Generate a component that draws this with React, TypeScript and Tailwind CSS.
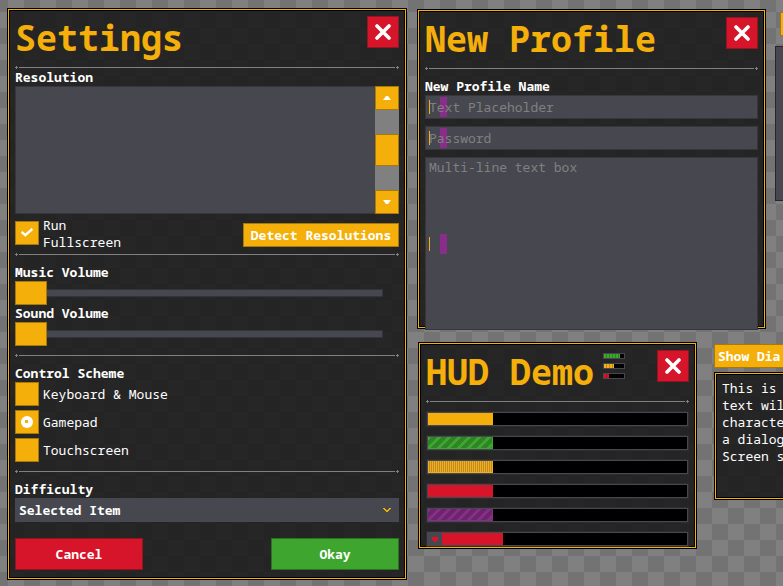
import type { ReactNode } from "react";

const FRAME =
  "border border-[#f4af0a] bg-[#161616]/85 shadow-[0_0_0_1px_#000,inset_0_0_0_1px_#000]";

function Separator() {
  return (
    <div className="flex h-[3px] items-center gap-px text-[#808080]" role="separator">
      <Plus />
      <div className="h-px grow bg-[#808080]" />
      <Plus />
    </div>
  );
}

function Plus() {
  return (
    <svg className="size-[3px] shrink-0" viewBox="0 0 3 3" shapeRendering="crispEdges" fill="currentColor">
      <path d="M1 0h1v1h1v1h-1v1h-1v-1h-1v-1h1z" />
    </svg>
  );
}

function CloseButton() {
  return (
    <button
      aria-label="Close"
      className="ml-auto flex size-8 shrink-0 items-center justify-center border border-[#961420] bg-[#d6142a]"
    >
      <svg className="size-4" viewBox="0 0 16 16" fill="none" stroke="#fff" strokeWidth="3.6" strokeLinecap="round">
        <path d="M2 2 14 14M14 2 2 14" />
      </svg>
    </button>
  );
}

function TitleBar({ title, children }: { title: string; children?: ReactNode }) {
  return (
    <header>
      <div className="flex h-[50px] items-start">
        <h1 className="text-[35px] leading-[44px] font-bold whitespace-nowrap text-[#f4af0a]">{title}</h1>
        {children}
        <CloseButton />
      </div>
      <Separator />
    </header>
  );
}

function Slider({ id, label }: { id: string; label: string }) {
  return (
    <div>
      <label htmlFor={id} className="block font-bold">
        {label}
      </label>
      <div className="relative h-6">
        <div className="absolute top-2 right-4 left-4 h-2 border border-[#33333b] bg-[#474750]" />
        <input
          id={id}
          type="range"
          defaultValue={0}
          className="relative block h-6 w-full appearance-none bg-transparent [&::-webkit-slider-thumb]:h-6 [&::-webkit-slider-thumb]:w-8 [&::-webkit-slider-thumb]:appearance-none [&::-webkit-slider-thumb]:border [&::-webkit-slider-thumb]:border-[#a87908] [&::-webkit-slider-thumb]:bg-[#f4af0a]"
        />
      </div>
    </div>
  );
}

function Tick() {
  return (
    <svg className="pointer-events-none absolute top-[7px] left-1.5 h-[9px] w-3" viewBox="0 0 12 9" fill="none" stroke="#fff" strokeWidth="2.4">
      <path d="M.6 3.8 4.3 7.2 11.4 1" />
    </svg>
  );
}

function RadioMark() {
  return (
    <svg className="pointer-events-none absolute top-1.5 left-1.5 hidden size-3 peer-checked:block" viewBox="0 0 12 12">
      <circle cx="6" cy="6" r="6" fill="#fff" />
      <rect x="4" y="4" width="3" height="3" fill="#f4af0a" shapeRendering="crispEdges" />
    </svg>
  );
}

function Radio({ label, checked }: { label: string; checked?: boolean }) {
  return (
    <label className="flex items-center gap-1">
      <span className="relative size-6 shrink-0">
        <input
          type="radio"
          name="scheme"
          defaultChecked={checked}
          className="peer block size-6 appearance-none border border-[#a87908] bg-[#f4af0a]"
        />
        <RadioMark />
      </span>
      {label}
    </label>
  );
}

function ScrollList() {
  return (
    <div className="flex h-32 border border-[#36363c] bg-[#474750]">
      <div className="-my-px -mr-px ml-auto flex w-6 flex-col bg-[#808080]">
        <button aria-label="Scroll up" className="flex h-6 items-center justify-center border border-[#a87908] bg-[#f4af0a]">
          <svg className="h-1 w-2" viewBox="0 0 8 4" fill="#fff">
            <path d="M0 4 3 0h2l3 4z" />
          </svg>
        </button>
        <div className="mt-6 h-8 border border-[#a87908] bg-[#f4af0a]" />
        <button aria-label="Scroll down" className="mt-auto flex h-6 items-center justify-center border border-[#a87908] bg-[#f4af0a]">
          <svg className="h-1 w-2" viewBox="0 0 8 4" fill="#fff">
            <path d="M0 0 3 4h2l3-4z" />
          </svg>
        </button>
      </div>
    </div>
  );
}

function SettingsWindow() {
  return (
    <section className={`absolute top-[9px] left-2 w-[398px] px-1.5 pt-1.5 pb-2 ${FRAME}`}>
      <TitleBar title="Settings" />
      <h2 className="font-bold">Resolution</h2>
      <ScrollList />
      <div className="mt-[3px] mb-0.5 flex items-start justify-between">
        <label className="flex w-32 items-start gap-1">
          <span className="relative mt-1 size-6 shrink-0">
            <input type="checkbox" defaultChecked className="block size-6 appearance-none border border-[#a87908] bg-[#f4af0a]" />
            <Tick />
          </span>
          Run Fullscreen
        </label>
        <button className="mt-1.5 h-6 w-39 border border-[#a87908] bg-[#f4af0a] font-bold whitespace-nowrap">
          Detect Resolutions
        </button>
      </div>
      <Separator />
      <div className="my-2">
        <Slider id="music" label="Music Volume" />
        <Slider id="sound" label="Sound Volume" />
      </div>
      <Separator />
      <fieldset className="my-2">
        <legend className="font-bold">Control Scheme</legend>
        <div className="flex flex-col gap-1">
          <Radio label="Keyboard & Mouse" />
          <Radio label="Gamepad" checked />
          <Radio label="Touchscreen" />
        </div>
      </fieldset>
      <Separator />
      <label htmlFor="difficulty" className="mt-2 block font-bold">
        Difficulty
      </label>
      <div className="relative">
        <select id="difficulty" className="block h-6 w-full appearance-none bg-[#474750] px-1 font-bold">
          <option>Selected Item</option>
        </select>
        <svg className="pointer-events-none absolute top-2.5 right-2 h-1 w-2" viewBox="0 0 8 4" fill="#f4af0a" shapeRendering="crispEdges">
          <path d="M0 0h2v1h1v1h2v-1h1v-1h2v1h-1v1h-1v1h-1v1h-2v-1h-1v-1h-1v-1h-1z" />
        </svg>
      </div>
      <div className="mt-4 flex justify-between">
        <button className="h-8 w-32 border border-[#961420] bg-[#d6142a] font-bold">Cancel</button>
        <button className="h-8 w-32 border border-[#2b7321] bg-[#3ea52f] font-bold">Okay</button>
      </div>
    </section>
  );
}

function Caret() {
  return (
    <>
      <span className="absolute top-1/2 left-1 h-3.5 w-px -translate-y-1/2 bg-[#f4af0a]" />
      <span className="absolute top-1/2 left-[15px] h-5 w-[7px] -translate-y-1/2 bg-[#8a2d8a]" />
    </>
  );
}

const FIELD = "relative block w-full border border-[#36363c] bg-transparent px-[3px] placeholder:text-[#808080] placeholder:opacity-100";

function ProfileWindow() {
  return (
    <section className={`absolute top-2.5 left-[418px] h-[318px] w-[347px] p-1.5 ${FRAME}`}>
      <TitleBar title="New Profile" />
      <label htmlFor="profile" className="mt-2 block font-bold">
        New Profile Name
      </label>
      <div className="flex flex-col gap-[7px]">
        <div className="relative bg-[#474750]">
          <Caret />
          <input id="profile" type="text" placeholder="Text Placeholder" className={`h-6 ${FIELD}`} />
        </div>
        <div className="relative bg-[#474750]">
          <Caret />
          <input type="password" aria-label="Password" placeholder="Password" className={`h-6 ${FIELD}`} />
        </div>
        <div className="relative bg-[#474750]">
          <Caret />
          <textarea aria-label="Multi-line text box" placeholder="Multi-line text box" className={`h-[173px] resize-none pt-px ${FIELD}`} />
        </div>
      </div>
    </section>
  );
}

const STRIPES_GREEN =
  "border-r border-b border-[#3ea52f] bg-[linear-gradient(135deg,#3ea52f_20%,#2f8427_0_50%,#3ea52f_0_70%,#2f8427_0)] bg-[length:10px_10px]";
const STRIPES_PURPLE =
  "border-r border-b border-[#8a2d8a] bg-[linear-gradient(135deg,#8a2d8a_20%,#6b256b_0_50%,#8a2d8a_0_70%,#6b256b_0)] bg-[length:10px_10px]";
const STRIPES_YELLOW =
  "border-b border-[#f0ae22] bg-[repeating-linear-gradient(90deg,#f0ae22_0_1px,#c08a1c_1px_2px)]";

function Bar({ fill, heart }: { fill: string; heart?: boolean }) {
  return (
    <div className="border border-[#2c2c31]">
      <div className="flex h-3.5 border border-[#474750] bg-black">
        {heart && (
          <div className="flex w-3.5 items-center justify-center bg-[#474750]">
            <svg className="h-[5px] w-1.5" viewBox="0 0 6 5" fill="#d6142a" shapeRendering="crispEdges">
              <path d="M0 0h6v3h-1v1h-1v1h-2v-1h-1v-1h-1z" />
            </svg>
          </div>
        )}
        <div className="flex grow">
          <div className={`w-1/4 ${fill}`} />
        </div>
      </div>
    </div>
  );
}

function MiniBar({ fill }: { fill: string }) {
  return (
    <div className="h-1.5 w-[22px] border border-[#474750] bg-black">
      <div className={`h-full ${fill}`} />
    </div>
  );
}

function HudWindow() {
  return (
    <section className={`absolute top-[343px] left-[419px] h-[205px] w-[277px] overflow-hidden p-1.5 ${FRAME}`}>
      <TitleBar title="HUD Demo">
        <div className="mt-[3px] ml-[9px] flex flex-col gap-1">
          <MiniBar fill="w-4/5 bg-[repeating-linear-gradient(90deg,#3ea52f_0_2px,#2f8427_2px_3px)]" />
          <MiniBar fill="w-1/2 bg-[repeating-linear-gradient(90deg,#f0ae22_0_2px,#c08a1c_2px_3px)]" />
          <MiniBar fill="w-1/4 bg-[repeating-linear-gradient(90deg,#d6142a_0_2px,#a01222_2px_3px)]" />
        </div>
      </TitleBar>
      <div className="mt-2 flex flex-col gap-2">
        <Bar fill="bg-[#f4af0a]" />
        <Bar fill={STRIPES_GREEN} />
        <Bar fill={STRIPES_YELLOW} />
        <Bar fill="bg-[#d6142a]" />
        <Bar fill={STRIPES_PURPLE} />
        <Bar fill="bg-[#d6142a]" heart />
      </div>
    </section>
  );
}

function DialogDemo() {
  return (
    <section className="absolute top-[344px] left-[714px] w-[300px]">
      <button className="block h-6 w-28 border border-[#a87908] bg-[#f4af0a] px-[3px] text-left font-bold whitespace-nowrap">Show Dia</button>
      <div className={`mx-px mt-[5px] h-[126px] px-1.5 py-1.5 whitespace-pre ${FRAME}`}>
        {"This is\ntext wil\ncharacte\na dialog\nScreen s"}
      </div>
    </section>
  );
}

export default function App() {
  return (
    <main className="relative h-screen overflow-hidden bg-[conic-gradient(#808080_25%,#737373_0_50%,#808080_0_75%,#737373_0)] bg-[length:32px_32px] bg-[position:8px_12px] font-['Noto_Sans_Mono','DejaVu_Sans_Mono',monospace] text-[13px] leading-[17px] text-white">
      <SettingsWindow />
      <ProfileWindow />
      <HudWindow />
      <DialogDemo />
      <button aria-label="Add" className="absolute top-3 left-[780px] h-6 w-24 border border-[#a87908] bg-[#f4af0a]" />
      <div className="absolute top-[46px] left-[775px] h-[155px] w-60 border border-[#26262a] bg-[#474750]" />
    </main>
  );
}
